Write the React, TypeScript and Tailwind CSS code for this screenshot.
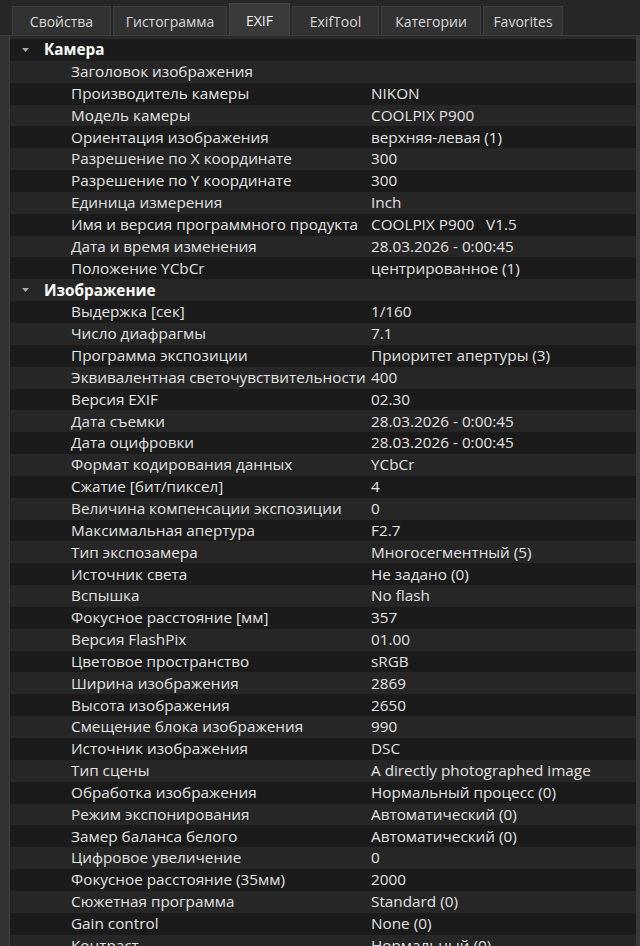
import React from "react";

const tabs = ["Свойства", "Гистограмма", "EXIF", "ExifTool", "Категории", "Favorites"];
const tabW = [99, 114, 61, 87, 100, 80];

type Row = { h?: string; l?: string; v?: string };
const rows: Row[] = [
  { h: "Камера" },
  { l: "Заголовок изображения", v: "" },
  { l: "Производитель камеры", v: "NIKON" },
  { l: "Модель камеры", v: "COOLPIX P900" },
  { l: "Ориентация изображения", v: "верхняя-левая (1)" },
  { l: "Разрешение по X координате", v: "300" },
  { l: "Разрешение по Y координате", v: "300" },
  { l: "Единица измерения", v: "Inch" },
  { l: "Имя и версия программного продукта", v: "COOLPIX P900   V1.5" },
  { l: "Дата и время изменения", v: "28.03.2026 - 0:00:45" },
  { l: "Положение YCbCr", v: "центрированное (1)" },
  { h: "Изображение" },
  { l: "Выдержка [сек]", v: "1/160" },
  { l: "Число диафрагмы", v: "7.1" },
  { l: "Программа экспозиции", v: "Приоритет апертуры (3)" },
  { l: "Эквивалентная светочувствительности", v: "400" },
  { l: "Версия EXIF", v: "02.30" },
  { l: "Дата съемки", v: "28.03.2026 - 0:00:45" },
  { l: "Дата оцифровки", v: "28.03.2026 - 0:00:45" },
  { l: "Формат кодирования данных", v: "YCbCr" },
  { l: "Сжатие [бит/пиксел]", v: "4" },
  { l: "Величина компенсации экспозиции", v: "0" },
  { l: "Максимальная апертура", v: "F2.7" },
  { l: "Тип экспозамера", v: "Многосегментный (5)" },
  { l: "Источник света", v: "Не задано (0)" },
  { l: "Вспышка", v: "No flash" },
  { l: "Фокусное расстояние [мм]", v: "357" },
  { l: "Версия FlashPix", v: "01.00" },
  { l: "Цветовое пространство", v: "sRGB" },
  { l: "Ширина изображения", v: "2869" },
  { l: "Высота изображения", v: "2650" },
  { l: "Смещение блока изображения", v: "990" },
  { l: "Источник изображения", v: "DSC" },
  { l: "Тип сцены", v: "A directly photographed image" },
  { l: "Обработка изображения", v: "Нормальный процесс (0)" },
  { l: "Режим экспонирования", v: "Автоматический (0)" },
  { l: "Замер баланса белого", v: "Автоматический (0)" },
  { l: "Цифровое увеличение", v: "0" },
  { l: "Фокусное расстояние (35мм)", v: "2000" },
  { l: "Сюжетная программа", v: "Standard (0)" },
  { l: "Gain control", v: "None (0)" },
  { l: "Контраст", v: "Нормальный (0)" },
];

export default function App() {
  return (
    <div
      className="w-[640px] h-[946px] overflow-hidden bg-[#2a2a2a] flex flex-col text-[#e2e2e2]"
      style={{ fontFamily: '"Open Sans", "Noto Sans", sans-serif' }}
    >
      <div className="h-[36px] shrink-0 flex items-end pl-[12px] gap-[2px] border-b border-[#3c3c3c] bg-[#262626]">
        {tabs.map((t, i) => {
          const active = t === "EXIF";
          return (
            <div
              key={t}
              style={{ width: tabW[i] }}
              className={
                active
                  ? "h-[33px] mb-[-1px] flex items-center justify-center bg-[#3a3a3a] border border-[#474747] border-b-0 text-[14px] text-[#f0f0f0]"
                  : "h-[29px] flex items-center justify-center bg-[#323232] border border-[#3f3f3f] border-b-0 text-[14px] text-[#d8d8d8]"
              }
            >
              {t}
            </div>
          );
        })}
      </div>
      <div className="flex-1 flex min-h-0">
        <div className="w-[10px] shrink-0 bg-[#323232] border-r border-[#3e3e3e]" />
        <div className="flex-1 min-w-0 pt-[3px] overflow-hidden">
          {rows.map((r, i) => (
            <div
              key={i}
              className={
                "h-[21.85px] flex items-center text-[15.3px] leading-none whitespace-pre " +
                (i % 2 === 0 ? "bg-[#1b1b1b]" : "bg-[#262626]")
              }
            >
              {r.h ? (
                <>
                  <svg width="10" height="8" viewBox="0 0 10 8" className="ml-[11px] mr-[13px]">
                    <polygon points="1,2 8,2 4.5,6" fill="#a8a8a8" />
                  </svg>
                  <span className="font-bold text-white">{r.h}</span>
                </>
              ) : (
                <>
                  <span className="ml-[61px] w-[300px] shrink-0">{r.l}</span>
                  <span>{r.v}</span>
                </>
              )}
            </div>
          ))}
        </div>
        <div className="w-[4px] shrink-0 bg-[#3a3a3a]" />
      </div>
    </div>
  );
}
